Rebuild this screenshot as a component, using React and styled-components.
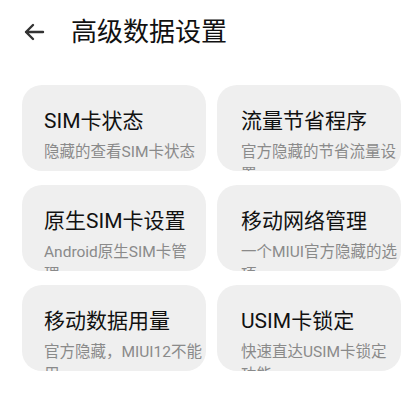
import styled, { createGlobalStyle } from "styled-components";

const GlobalStyle = createGlobalStyle`
  body {
    margin: 0;
    background: #ffffff;
    font-family: "Roboto", "Noto Sans CJK SC", sans-serif;
  }
`;

const Page = styled.div`
  width: 418px;
  height: 406px;
  overflow: hidden;
`;

const Header = styled.header`
  display: flex;
  align-items: center;
  height: 40px;
  padding: 12px 0 0 22px;
`;

const BackButton = styled.button`
  display: flex;
  align-items: center;
  justify-content: center;
  width: 24px;
  height: 24px;
  padding: 0;
  margin-right: 25px;
  border: none;
  background: none;
  color: #333333;
`;

const Title = styled.h1`
  margin: 0;
  font-size: 26px;
  font-weight: 400;
  color: #111111;
  line-height: 36px;
`;

const Grid = styled.div`
  display: grid;
  grid-template-columns: 184px 184px;
  column-gap: 11px;
  row-gap: 14px;
  padding: 33px 0 0 22px;
`;

const Card = styled.div`
  height: 86px;
  box-sizing: border-box;
  padding: 22px 0 0 ${(p) => p.$inset}px;
  border-radius: 20px;
  background: #efefef;
  overflow: hidden;
`;

const CardTitle = styled.div`
  font-size: 21px;
  line-height: 28px;
  color: #111111;
  white-space: nowrap;
`;

const CardDesc = styled.div`
  margin-top: 6px;
  font-size: 15.5px;
  line-height: 23px;
  color: #8a8a8a;
`;

const DescLine = styled.div`
  white-space: nowrap;
`;

const items = [
  ["SIM卡状态", ["隐藏的查看SIM卡状态"]],
  ["流量节省程序", ["官方隐藏的节省流量设", "置"]],
  ["原生SIM卡设置", ["Android原生SIM卡管", "理"]],
  ["移动网络管理", ["一个MIUI官方隐藏的选", "项"]],
  ["移动数据用量", ["官方隐藏，MIUI12不能", "用"]],
  ["USIM卡锁定", ["快速直达USIM卡锁定", "功能"]],
];

export default function App() {
  return (
    <Page>
      <GlobalStyle />
      <Header>
        <BackButton aria-label="返回">
          <svg width="22" height="22" viewBox="0 0 22 22" fill="none">
            <path
              d="M20 11H3M10 4l-7 7 7 7"
              stroke="currentColor"
              strokeWidth="2.4"
              strokeLinecap="round"
              strokeLinejoin="round"
            />
          </svg>
        </BackButton>
        <Title>高级数据设置</Title>
      </Header>
      <Grid>
        {items.map(([t, lines], i) => (
          <Card key={t} $inset={i % 2 ? 24 : 22}>
            <CardTitle>{t}</CardTitle>
            <CardDesc>
              {lines.map((l) => (
                <DescLine key={l}>{l}</DescLine>
              ))}
            </CardDesc>
          </Card>
        ))}
      </Grid>
    </Page>
  );
}
